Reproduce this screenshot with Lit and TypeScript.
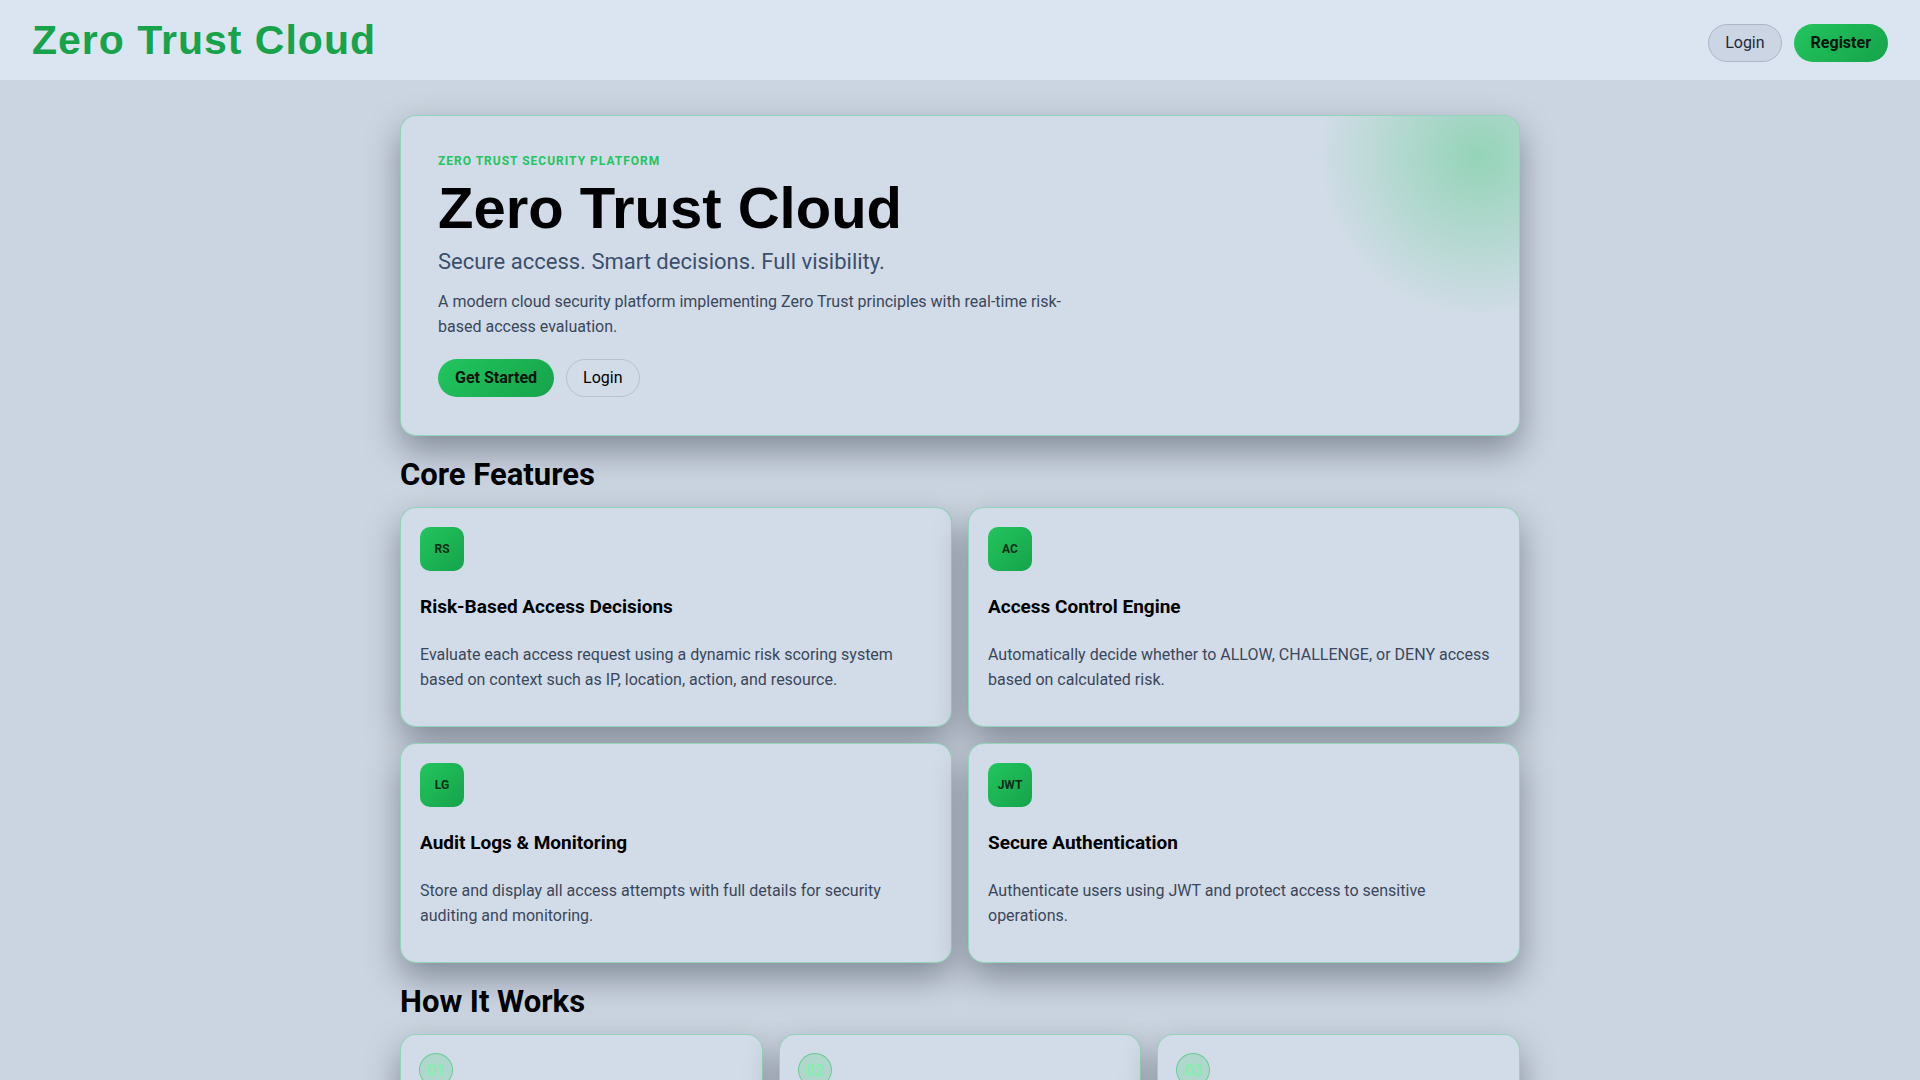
import { LitElement, html, css } from "lit";
import { customElement } from "lit/decorators.js";

const FEATURES = [
  {
    tag: "RS",
    title: "Risk-Based Access Decisions",
    text: "Evaluate each access request using a dynamic risk scoring system based on context such as IP, location, action, and resource.",
  },
  {
    tag: "AC",
    title: "Access Control Engine",
    text: "Automatically decide whether to ALLOW, CHALLENGE, or DENY access based on calculated risk.",
  },
  {
    tag: "LG",
    title: "Audit Logs & Monitoring",
    text: "Store and display all access attempts with full details for security auditing and monitoring.",
  },
  {
    tag: "JWT",
    title: "Secure Authentication",
    text: "Authenticate users using JWT and protect access to sensitive operations.",
  },
];

const STEPS = ["01", "02", "03"];

@customElement("app-root")
export class AppRoot extends LitElement {
  static styles = css`
    :host {
      display: block;
      height: 100vh;
      overflow: hidden;
      background: #cbd5e1;
      color: #000;
      font: 16px/25px Roboto, sans-serif;
    }
    * {
      box-sizing: border-box;
    }
    h1,
    h2,
    h3,
    p {
      margin: 0;
    }
    a {
      color: inherit;
      text-decoration: none;
    }
    .topbar {
      display: flex;
      justify-content: space-between;
      align-items: center;
      height: 80px;
      padding: 0 32px;
      background: #dbe5f1;
    }
    .topbar .logo {
      font: bold 41px/48px "Liberation Sans", Arial, sans-serif;
      letter-spacing: 1px;
      color: #16a34a;
    }
    .actions {
      display: flex;
      gap: 12px;
    }
    .topbar .actions {
      padding-top: 6px;
    }
    .btn {
      font: 16px/20px Roboto, sans-serif;
      padding: 8px 16px;
      border: 1px solid #b4c2d2;
      border-radius: 999px;
      background: transparent;
      color: #000;
      cursor: pointer;
    }
    .muted {
      background: #cbd5e4;
      border-color: #a9b8ca;
      color: #1e293b;
    }
    .primary {
      font-weight: 700;
      border: 0;
      padding: 9px 17px;
      background: linear-gradient(135deg, #22c55e, #16a34a);
      color: #03140a;
    }
    .page {
      width: 100%;
      max-width: 1152px;
      margin: 0 auto;
      padding: 35px 16px;
    }
    .panel {
      background: #d2dce8;
      border: 1px solid rgba(34, 197, 94, 0.35);
      border-radius: 16px;
      box-shadow: 0 15px 35px rgba(2, 6, 23, 0.36);
    }
    .hero {
      position: relative;
      overflow: hidden;
      padding: 32px 37px 38px;
    }
    .hero::after {
      content: "";
      position: absolute;
      top: -125px;
      right: -125px;
      width: 330px;
      height: 330px;
      background: radial-gradient(circle, rgba(34, 197, 94, 0.35), transparent 70%);
    }
    .eyebrow {
      font-size: 12px;
      line-height: 27px;
      font-weight: 700;
      letter-spacing: 1px;
      color: #22c55e;
    }
    .hero h1 {
      font: bold 58px/64px "Liberation Sans", Arial, sans-serif;
      padding-top: 1px;
    }
    .tagline {
      font-size: 22px;
      line-height: 35px;
      color: #3b4f6b;
      padding: 4px 0 10px;
    }
    .lead {
      max-width: 640px;
      color: #3a475b;
    }
    .hero .actions {
      padding-top: 20px;
    }
    h2 {
      font-size: 31px;
      line-height: 40px;
      padding: 19px 0 12px;
    }
    .grid {
      display: grid;
      grid-template-columns: repeat(2, 1fr);
      gap: 16px;
    }
    .steps {
      display: grid;
      grid-template-columns: repeat(3, 1fr);
      gap: 16px;
    }
    .feature {
      padding: 19px 19px 34px;
    }
    .tag {
      display: grid;
      place-items: center;
      width: 44px;
      height: 44px;
      border-radius: 10px;
      background: linear-gradient(135deg, #22c55e, #16a34a);
      color: #052e16;
      font-size: 12px;
      font-weight: 700;
    }
    h3 {
      font-size: 19px;
      line-height: 30px;
      margin: 21px 0 20px;
    }
    .feature p {
      color: #3a475b;
    }
    .step {
      padding: 18px;
      min-height: 180px;
    }
    .num {
      display: grid;
      place-items: center;
      width: 34px;
      height: 34px;
      border-radius: 50%;
      border: 1px solid rgba(34, 197, 94, 0.5);
      background: rgba(34, 197, 94, 0.2);
      color: #86efac;
      font-weight: 700;
    }
  `;

  render() {
    return html`
      <header class="topbar">
        <a class="logo" href="#">Zero Trust Cloud</a>
        <nav class="actions">
          <button class="btn muted">Login</button>
          <button class="btn primary">Register</button>
        </nav>
      </header>
      <main class="page">
        <section class="panel hero">
          <p class="eyebrow">ZERO TRUST SECURITY PLATFORM</p>
          <h1>Zero Trust Cloud</h1>
          <p class="tagline">Secure access. Smart decisions. Full visibility.</p>
          <p class="lead">
            A modern cloud security platform implementing Zero Trust principles with real-time risk-based access
            evaluation.
          </p>
          <div class="actions">
            <button class="btn primary">Get Started</button>
            <button class="btn">Login</button>
          </div>
        </section>
        <section>
          <h2>Core Features</h2>
          <div class="grid">
            ${FEATURES.map(
              (f) => html`
                <article class="panel feature">
                  <div class="tag">${f.tag}</div>
                  <h3>${f.title}</h3>
                  <p>${f.text}</p>
                </article>
              `
            )}
          </div>
        </section>
        <section>
          <h2>How It Works</h2>
          <div class="steps">
            ${STEPS.map((n) => html`<article class="panel step"><div class="num">${n}</div></article>`)}
          </div>
        </section>
      </main>
    `;
  }
}
